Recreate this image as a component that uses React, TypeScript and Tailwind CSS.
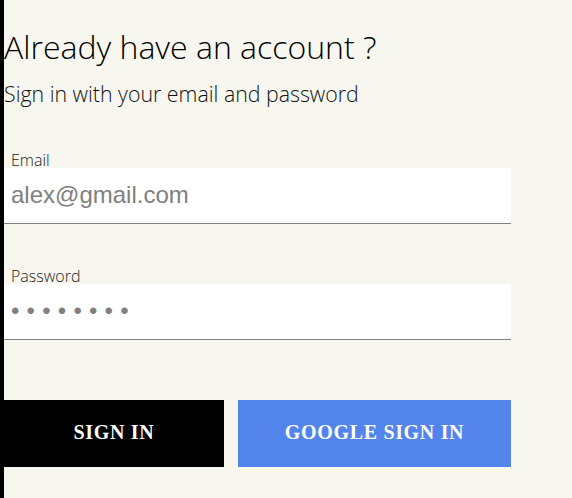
import React, { useState } from "react";

export default function App() {
  const [email, setEmail] = useState("alex@gmail.com");
  const [password, setPassword] = useState("12345678");

  return (
    <div className="min-h-screen flex bg-[#f7f7ef]">
      {/* edge of the neighbouring panel */}
      <div className="w-1 bg-black shrink-0" />

      <div className="w-[507px] flex flex-col font-['Open_Sans',sans-serif]">
        <h2 className="mt-[25px] text-[32px] leading-[44px] font-light text-black">
          Already have an account ?
        </h2>
        <span className="mt-[10px] text-[21.33px] leading-[29px] font-light text-[#111]">
          Sign in with your email and password
        </span>

        <form className="flex flex-col" onSubmit={(e) => e.preventDefault()}>
          {/* Email */}
          <label className="mt-[44px] pl-[7px] text-[16px] leading-[16px] font-light text-[#222]">
            Email
          </label>
          <input
            type="email"
            value={email}
            onChange={(e) => setEmail(e.target.value)}
            className="h-[56px] w-full bg-white border-b border-[#808080] pl-[7px] pr-[13px] pb-[2px] text-[24px] text-[#808080] font-['Liberation_Sans',Arial,sans-serif] outline-none"
          />

          {/* Password */}
          <label className="mt-[44px] pl-[7px] text-[16px] leading-[16px] font-light text-[#222]">
            Password
          </label>
          <input
            type="password"
            value={password}
            onChange={(e) => setPassword(e.target.value)}
            className="h-[56px] w-full bg-white border-b border-[#808080] pl-[7px] pr-[13px] pb-[2px] text-[24px] tracking-[0.3em] text-[#808080] font-['Liberation_Sans',Arial,sans-serif] outline-none"
          />

          <div className="mt-[60px] flex gap-[14px]">
            <button
              type="submit"
              className="w-[220px] h-[67px] pb-[3px] bg-black text-white uppercase font-bold text-[20px] tracking-[0.67px] font-['Liberation_Serif','Times_New_Roman',serif]"
            >
              Sign in
            </button>
            <button
              type="button"
              className="flex-1 h-[67px] pb-[3px] bg-[#5384ec] text-white uppercase font-bold text-[20px] tracking-[0.67px] font-['Liberation_Serif','Times_New_Roman',serif]"
            >
              Google sign in
            </button>
          </div>
        </form>
      </div>
    </div>
  );
}
